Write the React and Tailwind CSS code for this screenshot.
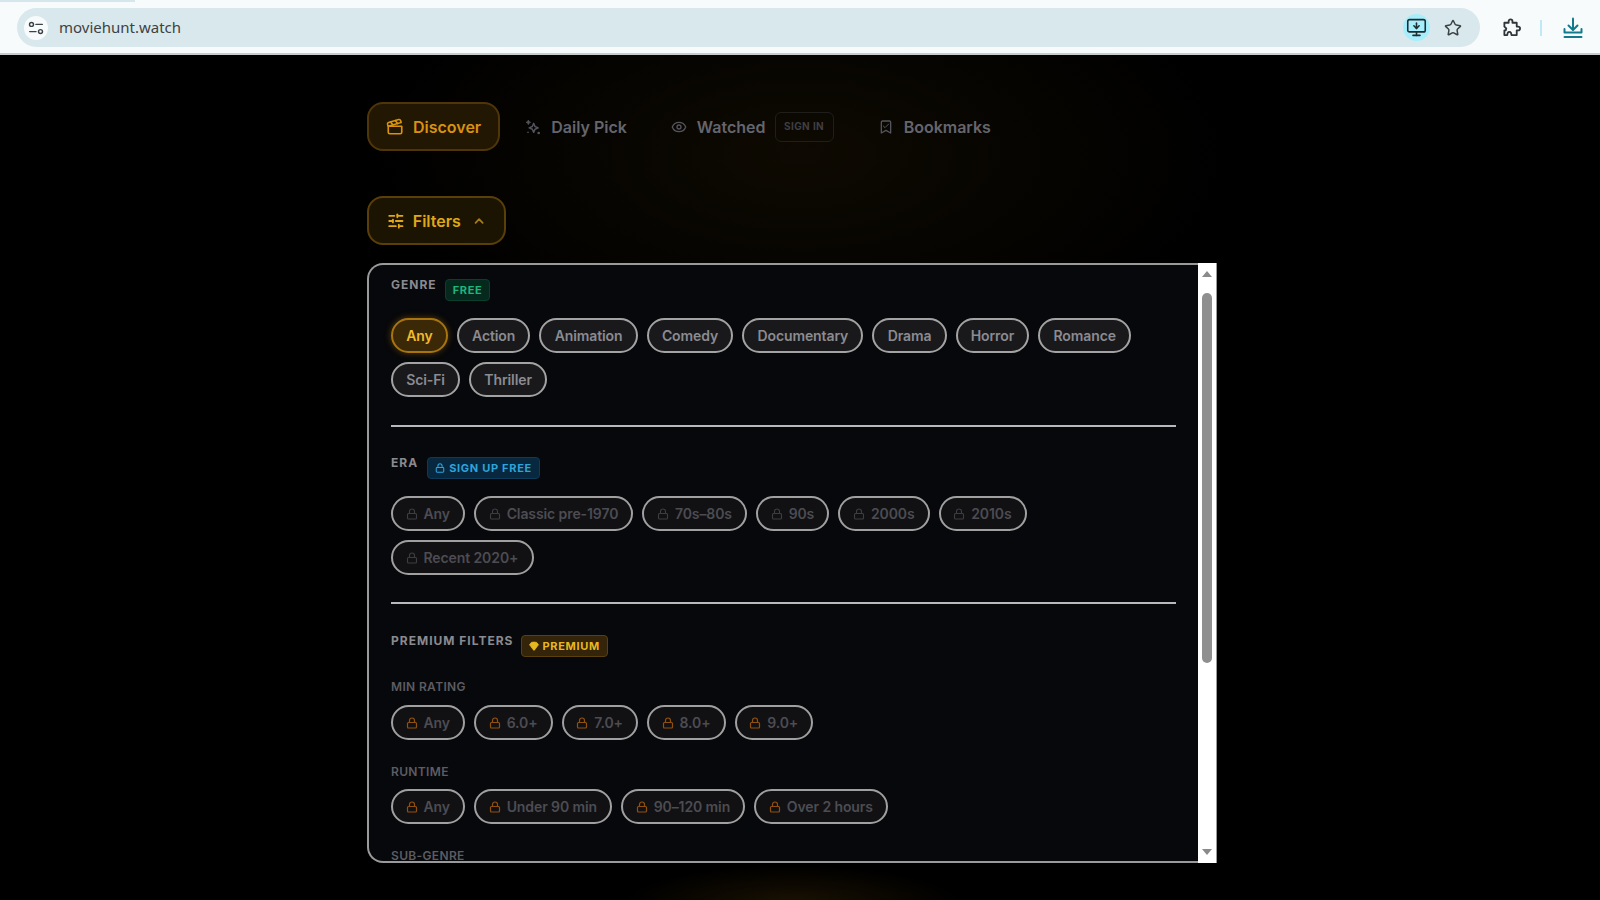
import { Bookmark, Check, ChevronUp, Clapperboard, Eye, Gem, Lock, MonitorDown, SlidersHorizontal, Star } from "lucide-react";

const FONT = "font-['Inter','Liberation_Sans',sans-serif]";

const genres = ["Any", "Action", "Animation", "Comedy", "Documentary", "Drama", "Horror", "Romance", "Sci-Fi", "Thriller"];
const eras = ["Any", "Classic pre-1970", "70s–80s", "90s", "2000s", "2010s", "Recent 2020+"];
const ratings = ["Any", "6.0+", "7.0+", "8.0+", "9.0+"];
const runtimes = ["Any", "Under 90 min", "90–120 min", "Over 2 hours"];

const SparkDots = ({ className }) => (
  <svg viewBox="0 0 24 24" className={className} fill="none" stroke="currentColor" strokeWidth="2.200" strokeLinejoin="round">
    <path d="M13 6.500l2 4.800 4.800 2-4.800 2-2 4.800-2-4.800-4.800-2 4.800-2z" />
    <path d="M5 1.500l1.100 2.400L8.500 5 6.100 6.100 5 8.500 3.900 6.100 1.500 5l2.400-1.100z" fill="currentColor" strokeWidth="1" />
    <circle cx="20.500" cy="21" r="2" fill="currentColor" stroke="none" />
    <circle cx="4.500" cy="20" r="1.200" fill="currentColor" stroke="none" />
  </svg>
);

const TuneIcon = () => (
  <svg viewBox="0 0 20 20" className="w-[18px] h-[18px] text-[#3c4346]" fill="none" stroke="currentColor" strokeWidth="1.600" strokeLinecap="round">
    <circle cx="5" cy="6" r="2.200" />
    <path d="M10 6h7" />
    <path d="M3 14h7" />
    <circle cx="15" cy="14" r="2.200" />
  </svg>
);

const ExtensionIcon = () => (
  <svg viewBox="0 0 20 20" className="ml-[22px] w-[19px] h-[19px] text-[#2e3639]" fill="none" stroke="currentColor" strokeWidth="1.900" strokeLinejoin="round">
    <path d="M2.500 5H7V3.500a2 2 0 0 1 4 0V5h4.500v4H17a2 2 0 0 1 0 4h-1.500v5H10l-.5-2.300a2 2 0 0 0-3.500 0L5.500 18h-3v-5H4l.5-2L2.500 9z" />
  </svg>
);

const DownloadIcon = () => (
  <svg viewBox="0 0 22 22" className="ml-[20px] w-[22px] h-[22px] text-[#137a8c]" fill="none" stroke="currentColor" strokeWidth="2" strokeLinecap="round" strokeLinejoin="round">
    <path d="M11 1.500v11" />
    <path d="M6.500 8.500l4.500 4.500 4.500-4.500" />
    <path d="M2.500 12v3.500h17V12" />
    <path d="M2.500 20h17" />
  </svg>
);

const Triangle = ({ down }) => (
  <svg viewBox="0 0 10 6" className="w-[10px] h-[6px] text-[#8a8a8a]" fill="currentColor">
    <path d={down ? "M0 0h10L5 6z" : "M5 0l5 6H0z"} />
  </svg>
);

const Tab = ({ icon, label, children }) => (
  <button className="flex items-center h-[49px] px-5 gap-[10px] text-[#65656e] text-base font-semibold">
    {icon}
    <span>{label}</span>
    {children}
  </button>
);

const Pill = ({ label, active, lock }) => {
  let tone = "px-[13.200px] bg-[#19191c] border-[#a3a3a3] text-[#8b8b91]";
  if (active) tone = "px-[13.200px] bg-[#3a2807] border-[#a8740f] text-[#eeba2c] shadow-[0_0_6px_#5a3d0a]";
  if (lock) tone = "pl-[12.500px] pr-[13.200px] bg-[#111114] border-[#a0a0a0] text-[#4c4c52]";
  return (
    <span className={`flex items-center h-[35px] gap-[6px] rounded-full border-2 text-sm font-semibold tracking-[-0.1px] ${tone}`}>
      {lock === "gray" && <Lock className="w-3 h-3 text-[#3d3d42]" strokeWidth={2.2} />}
      {lock === "amber" && <Lock className="w-3 h-3 text-[#92500f]" strokeWidth={2.4} />}
      {label}
    </span>
  );
};

const Pills = ({ items, lock, activeFirst }) => (
  <div className="flex flex-wrap gap-[9px]">
    {items.map((item, i) => (
      <Pill key={item} label={item} lock={lock} active={activeFirst && i === 0} />
    ))}
  </div>
);

const SectionHead = ({ title, children }) => (
  <div className="flex items-start gap-2 h-[22px]">
    <span className="text-xs font-bold tracking-[1px] text-[#8a8a90] leading-[12px]">{title}</span>
    {children}
  </div>
);

const SubLabel = ({ children }) => (
  <div className="text-xs font-semibold tracking-[0.35px] text-[#5c5c62] leading-[14px]">{children}</div>
);

const Divider = () => <div className="h-[2px] bg-[#b9b9b9]" />;

export default function App() {
  return (
    <div className={`${FONT} w-full h-[900px] overflow-hidden flex flex-col bg-black`}>
      <header className="h-[55px] shrink-0 flex items-center pt-[2px] bg-[#f7fbfc] border-b-2 border-[#c9cccd] relative">
        <div className="absolute top-0 left-0 w-[135px] h-[2px] bg-[#d5e7ec]" />
        <div className="ml-[17px] w-[1463px] h-[39px] rounded-full bg-[#d9e8ec] flex items-center pl-[7px] pr-[18px]">
          <span className="w-[24px] h-[24px] rounded-full bg-[#f7fbfc] flex items-center justify-center">
            <TuneIcon />
          </span>
          <span className="ml-[11px] text-[#3d4245] text-[15px] font-['Noto_Sans',sans-serif]">moviehunt.watch</span>
          <span className="ml-auto w-[27px] h-[27px] rounded-full bg-[#a6eefb] flex items-center justify-center">
            <MonitorDown className="w-[21px] h-[21px] text-[#1f2c30]" strokeWidth={1.8} />
          </span>
          <Star className="ml-[14px] w-[18px] h-[18px] text-[#3a4245]" strokeWidth={2} />
        </div>
        <ExtensionIcon />
        <div className="ml-[19px] w-[2px] h-[16px] bg-[#bfeaf3]" />
        <DownloadIcon />
      </header>

      <main className="flex-1 pr-[16px] bg-[radial-gradient(ellipse_430px_210px_at_800px_100px,#0e0a02_0%,transparent_100%),radial-gradient(ellipse_170px_40px_at_792px_850px,#1a1102_0%,transparent_100%)]">
        <div className="mx-auto w-[850px] pt-[47px]">
          <nav className="flex items-center gap-1">
            <button className="flex items-center h-[49px] mr-[1px] px-[17px] gap-[9px] rounded-2xl border-2 border-[#4f3608] bg-[#221703] text-[#d9920f] text-base font-semibold">
              <Clapperboard className="w-[18px] h-[18px]" strokeWidth={2.2} />
              Discover
            </button>
            <Tab icon={<SparkDots className="w-4 h-4 text-[#54545c]" />} label="Daily Pick" />
            <Tab icon={<Eye className="w-4 h-4 text-[#54545c]" strokeWidth={2} />} label="Watched">
              <span className="flex items-center h-[30px] -ml-[1px] px-[8.500px] rounded-md border border-[#1f1e1b] text-[10px] font-bold tracking-[0.4px] text-[#3f3f44]">SIGN IN</span>
            </Tab>
            <Tab
              icon={
                <span className="relative flex items-center justify-center w-4 h-4 text-[#54545c]">
                  <Bookmark className="w-4 h-4" strokeWidth={2} />
                  <Check className="absolute w-2 h-2 top-[3px]" strokeWidth={3} />
                </span>
              }
              label="Bookmarks"
            />
          </nav>

          <button className="mt-[45px] flex items-center h-[49px] w-[139px] px-[18px] gap-2 rounded-2xl border-2 border-[#5a3f08] bg-[#1c1403] text-[#e0a818] text-base font-semibold">
            <SlidersHorizontal className="w-5 h-5" strokeWidth={2.4} />
            Filters
            <ChevronUp className="ml-[3px] w-4 h-4 text-[#a67c14]" strokeWidth={3} />
          </button>

          <div className="mt-[18px] h-[600px] flex">
            <div className="flex-1 min-w-0 overflow-hidden rounded-l-2xl border-2 border-r-0 border-[#9a9a9a] bg-[#07080b] pl-[22px] pr-[22px] pt-[14px]">
              <SectionHead title="GENRE">
                <span className="flex items-center h-[22px] px-[7px] rounded bg-[#06291d] border border-[#0b3f2c] text-[11px] font-bold tracking-[0.7px] text-[#1fb57c]">FREE</span>
              </SectionHead>
              <div className="mt-[17px]">
                <Pills items={genres} activeFirst />
              </div>
              <div className="mt-[28px]"><Divider /></div>

              <div className="mt-[30px]">
                <SectionHead title="ERA">
                  <span className="flex items-center h-[22px] ml-[1px] px-[7px] gap-1 rounded bg-[#07283e] border border-[#0c3a58] text-[11px] font-bold tracking-[0.7px] text-[#2ea3dc]">
                    <Lock className="w-[10px] h-[10px]" strokeWidth={2.5} />
                    SIGN UP FREE
                  </span>
                </SectionHead>
              </div>
              <div className="mt-[17px] pr-[2px]">
                <Pills items={eras} lock="gray" />
              </div>
              <div className="mt-[27px]"><Divider /></div>

              <div className="mt-[31px]">
                <SectionHead title="PREMIUM FILTERS">
                  <span className="flex items-center h-[22px] px-[7px] gap-[3px] rounded bg-[#33240a] border border-[#5a400c] text-[11px] font-bold tracking-[0.7px] text-[#e8b820]">
                    <Gem className="w-[10px] h-[10px] fill-current" strokeWidth={2} />
                    PREMIUM
                  </span>
                </SectionHead>
              </div>
              <div className="mt-[23px]"><SubLabel>MIN RATING</SubLabel></div>
              <div className="mt-[11px]">
                <Pills items={ratings} lock="amber" />
              </div>
              <div className="mt-[25px]"><SubLabel>RUNTIME</SubLabel></div>
              <div className="mt-[10px]">
                <Pills items={runtimes} lock="amber" />
              </div>
              <div className="mt-[25px]"><SubLabel>SUB-GENRE</SubLabel></div>
            </div>

            <div className="w-[19px] shrink-0 bg-white flex flex-col items-center pt-2 pb-2 border-r border-[#9a9a9a]">
              <Triangle />
              <div className="mt-[16px] w-[10px] h-[370px] rounded-full bg-[#8f8f8f]" />
              <div className="mt-auto"><Triangle down /></div>
            </div>
          </div>
        </div>
      </main>
    </div>
  );
}
